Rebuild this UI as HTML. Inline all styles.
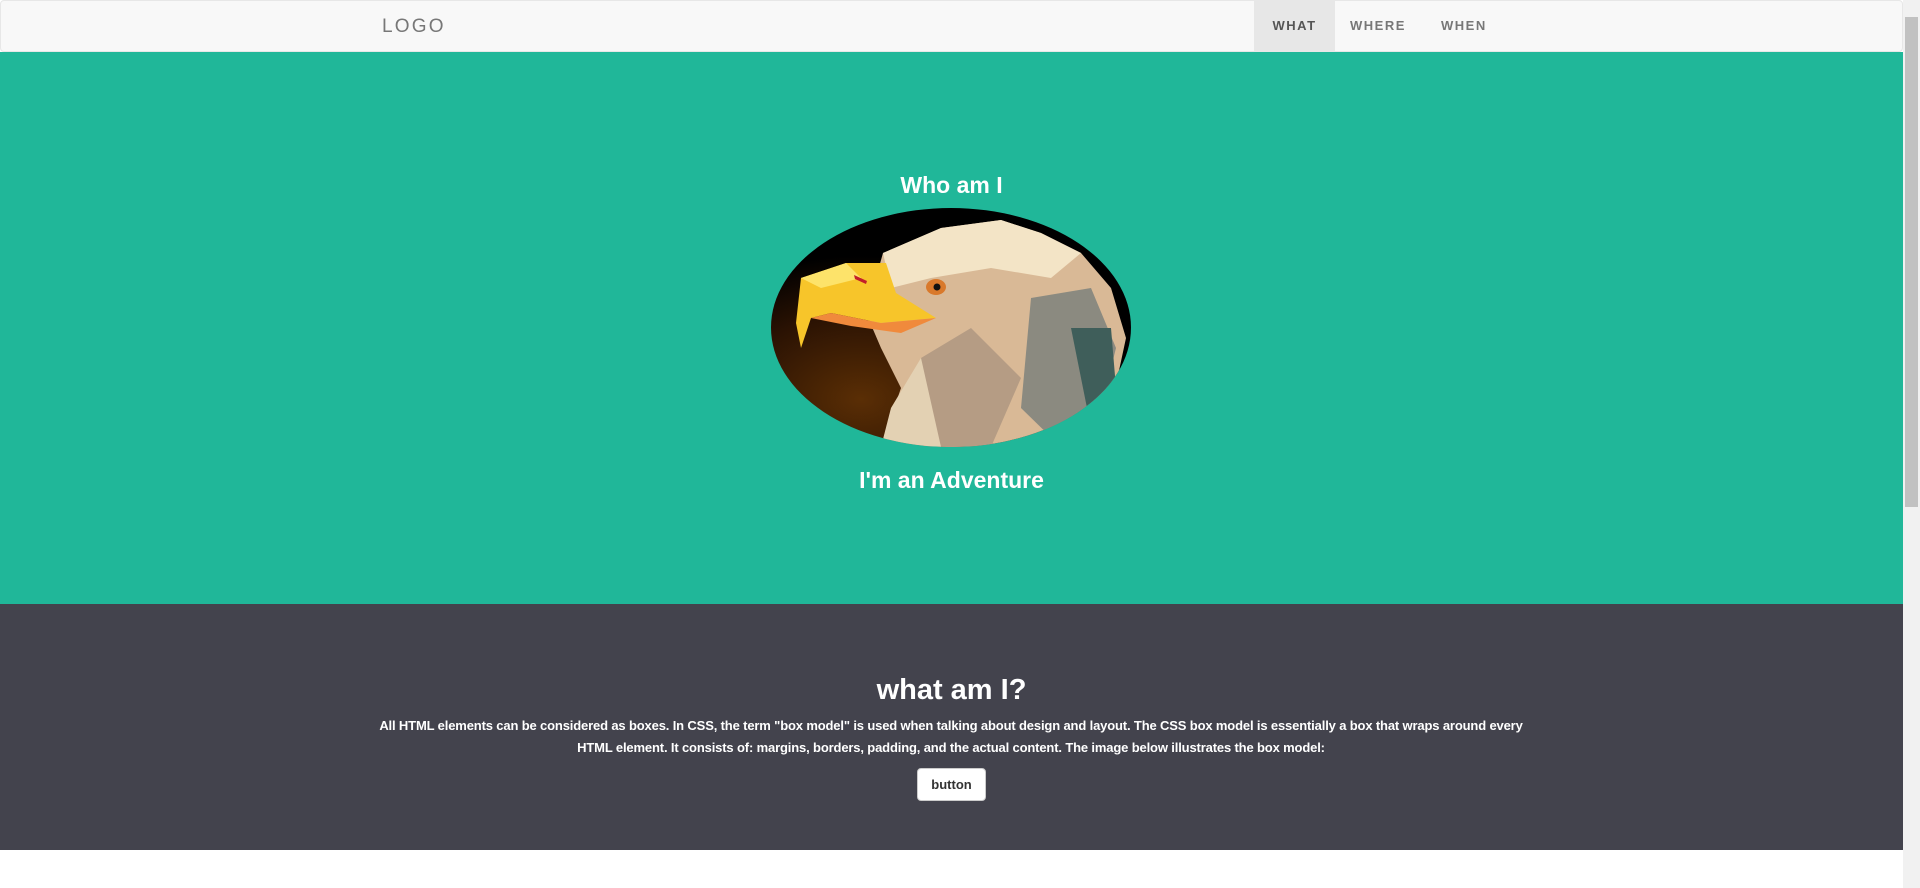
<!DOCTYPE html>
<html><head><meta charset="utf-8"><style>
*{box-sizing:border-box;margin:0;padding:0}
html,body{width:1920px;height:888px;overflow:hidden;background:#fff;font-family:"Liberation Sans",sans-serif}
#page{position:absolute;left:0;top:0;width:1903px;height:888px}
.nav{position:absolute;left:0;top:0;width:1903px;height:52px;background:#f8f8f8;border:1px solid #e7e7e7;border-radius:4px}
.logo{position:absolute;left:381px;top:15px;font-size:19px;letter-spacing:2.2px;color:#777}
.nl{position:absolute;top:0;height:50px;line-height:50px;font-size:13px;font-weight:bold;letter-spacing:1.5px;color:#777}
.green{position:absolute;top:52px;left:0;width:1903px;height:552px;background:#20b799;color:#fff;text-align:center}
.dark{position:absolute;top:604px;left:0;width:1903px;height:246px;background:#43434d;color:#fff;text-align:center}
.btn{position:absolute;left:917px;top:164px;width:69px;height:33px;background:#fff;border:1px solid #ccc;border-radius:4px;color:#333;font-size:13px;font-weight:bold;line-height:31px;text-align:center}
.sb{position:absolute;left:1903px;top:0;width:17px;height:888px;background:#f1f1f1}
.thumb{position:absolute;left:2px;width:13px;background:#c1c1c1}
</style></head><body>
<div id="page">
<div class="nav">
<div class="logo">LOGO</div>
<div class="nl" style="left:1253px;width:81px;background:#e7e7e7;color:#555;text-align:center">WHAT</div>
<div class="nl" style="left:1349px">WHERE</div>
<div class="nl" style="left:1440px">WHEN</div>
</div>
<div class="green">
<div style="position:absolute;left:0;width:100%;top:120px;font-size:23px;font-weight:bold">Who am I</div>
<svg style="position:absolute;left:771px;top:156px" width="360" height="239" viewBox="0 0 360 239">
<defs>
<clipPath id="c"><ellipse cx="180" cy="119.5" rx="180" ry="119.5"/></clipPath>
<radialGradient id="g" cx="0.25" cy="0.8" r="0.6"><stop offset="0" stop-color="#5a2e05"/><stop offset="0.6" stop-color="#2a1203"/><stop offset="1" stop-color="#000"/></radialGradient>
</defs>
<g clip-path="url(#c)">
<rect width="360" height="239" fill="url(#g)"/>
<polygon points="112,45 170,20 230,12 270,25 310,45 340,80 355,130 340,200 300,239 110,239 130,180 110,140 95,105" fill="#d9b996"/>
<polygon points="112,45 170,20 230,12 270,25 310,45 280,70 220,60 160,70 120,80" fill="#f3e4c6"/>
<polygon points="260,90 320,80 345,140 330,200 290,239 250,200" fill="#8b8a80"/>
<polygon points="300,120 340,120 345,180 320,220" fill="#3f5e5a"/>
<polygon points="150,150 200,120 250,170 220,239 150,239" fill="#b59c84"/>
<polygon points="120,200 150,150 170,239 110,239" fill="#e3d1b3"/>
<polygon points="30,70 75,55 115,55 125,85 165,110 110,115 60,105 40,110 30,140 25,115" fill="#f7c52a"/>
<polygon points="40,110 60,105 110,115 165,110 130,125 80,118" fill="#f08a3c"/>
<polygon points="30,70 75,55 90,70 50,80" fill="#fde36a"/>
<ellipse cx="165" cy="79" rx="10" ry="8" fill="#d9792b"/>
<circle cx="166" cy="79" r="3.5" fill="#111"/>
<polygon points="83,67 96,73 95,76 84,71" fill="#c21e2a"/>
</g>
</svg>
<div style="position:absolute;left:0;width:100%;top:415px;font-size:23px;font-weight:bold">I'm an Adventure</div>
</div>
<div class="dark">
<div style="position:absolute;left:0;width:100%;top:70px;font-size:29px;font-weight:bold">what am I?</div>
<div style="position:absolute;left:368px;width:1166px;top:111px;font-size:13px;font-weight:bold;line-height:22px;letter-spacing:-0.15px">All HTML elements can be considered as boxes. In CSS, the term "box model" is used when talking about design and layout. The CSS box model is essentially a box that wraps around every HTML element. It consists of: margins, borders, padding, and the actual content. The image below illustrates the box model:</div>
<div class="btn">button</div>
</div>
</div>
<div class="sb"><div class="thumb" style="top:17px;height:490px"></div></div>
</body></html>
